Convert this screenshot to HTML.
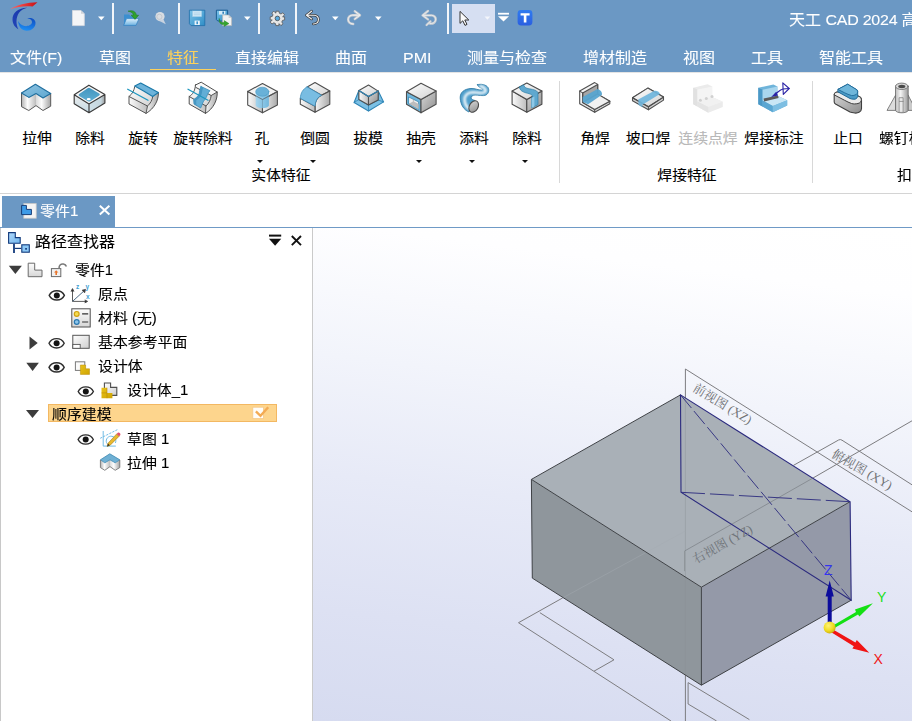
<!DOCTYPE html>
<html lang="zh-CN">
<head>
<meta charset="utf-8">
<title>天工 CAD 2024</title>
<style>
*{margin:0;padding:0;box-sizing:border-box}
html,body{width:912px;height:721px;overflow:hidden;background:#fff}
body{position:relative;font-family:"Liberation Sans","Noto Sans CJK SC",sans-serif;color:#000;font-size:14px}
.abs{position:absolute}
.rl,.gl,.tr{-webkit-text-stroke:0.12px currentColor}
.menu,#title,#tab span{-webkit-text-stroke:0.1px currentColor}
.tr,.menu,#title,#tab span{transform:scaleY(0.93)}
#hdr{position:absolute;left:0;top:0;width:912px;height:72px;background:#6b98c4}
.menu{position:absolute;top:45.5px;height:24px;line-height:24px;font-size:16px;color:#fff;white-space:nowrap}
.menu.on{color:#fbd15c}
#title{position:absolute;top:8px;left:789px;font-size:16px;color:#fff;white-space:nowrap;line-height:24px}
.qsep{position:absolute;top:3px;width:2px;height:31px;background:#f0f4f8}
#ribbon{position:absolute;left:0;top:72px;width:912px;height:121px;background:#fff;box-shadow:inset 0 1px 0 #e4e4e4}
.rl{position:absolute;top:54.8px;height:22px;line-height:22px;font-size:14.85px;white-space:nowrap;text-align:center;transform:translateX(-50%) scaleY(0.93)}
.rl.dis{color:#b8b8b8}
.gl{position:absolute;top:92.2px;height:22px;line-height:22px;font-size:14.85px;white-space:nowrap;transform:translateX(-50%) scaleY(0.93)}
.dd{position:absolute;top:87.6px;width:0;height:0;border-left:3.3px solid transparent;border-right:3.3px solid transparent;border-top:3.5px solid #111;transform:translateX(-50%)}
.rsep{position:absolute;top:9px;width:1px;height:102px;background:#d8d8d8}
#tabstrip{position:absolute;left:0;top:193px;width:912px;height:35px;background:#fff;border-top:1px solid #d4d4d4}
#tab{position:absolute;left:2px;top:196px;width:113px;height:31px;background:#6b98c4;color:#fff;font-size:15px;line-height:30px}
#tabline{position:absolute;left:0;top:227px;width:912px;height:1px;background:#6f9ac6}
#panel{position:absolute;left:0;top:228px;width:313px;height:493px;background:#fff;border-left:1px solid #c8c8c8;border-right:1px solid #cacaca}
.tr{position:absolute;height:24px;line-height:24px;font-size:14.9px;white-space:nowrap}
#view{position:absolute;left:313px;top:228px;width:599px;height:493px;overflow:hidden;background:linear-gradient(187deg,#ffffff 0%,#fefeff 12%,#f2f4fb 35%,#e7eaf7 56%,#dde1f3 80%,#d6dbf0 100%)}
</style>
</head>
<body>
<div id="hdr">
<svg class="abs" style="left:0;top:0" width="912" height="40" viewBox="0 0 912 40">
<defs>
<linearGradient id="gSave" x1="0" y1="0" x2="1" y2="1"><stop offset="0" stop-color="#7cc4ea"/><stop offset="1" stop-color="#2f8dc6"/></linearGradient>
<linearGradient id="gFold" x1="0" y1="0" x2="0" y2="1"><stop offset="0" stop-color="#dff0fb"/><stop offset="1" stop-color="#6fb3e2"/></linearGradient>
<linearGradient id="gT" x1="0" y1="0" x2="0" y2="1"><stop offset="0" stop-color="#2f7bf0"/><stop offset="1" stop-color="#2b5fe0"/></linearGradient>
<linearGradient id="gLogo" x1="1" y1="0" x2="0" y2="1"><stop offset="0" stop-color="#1634a8"/><stop offset="1" stop-color="#2346b8"/></linearGradient><linearGradient id="gLogo2" x1="0.7" y1="0" x2="0.4" y2="1"><stop offset="0" stop-color="#0f4fc4"/><stop offset="1" stop-color="#1e90f4"/></linearGradient>
<linearGradient id="gRed" x1="0" y1="0" x2="1" y2="0"><stop offset="0" stop-color="#ff6a6a"/><stop offset="0.5" stop-color="#e83a3a"/><stop offset="1" stop-color="#c80f14"/></linearGradient>
</defs>
<!-- logo -->
<path d="M10 9.2 C16 5.5 27 2.4 37.5 2.3 L32.6 6.5 C25 5.7 17 6.8 10 9.2Z" fill="url(#gRed)"/>
<path d="M27.2 7.7 C19 7.5 12.3 12.5 12.5 19.5 C12.6 24 15 27.5 18.4 29.2 C16 25 15.5 18 19 12.8 C21 10 24 8.4 27.2 7.7Z" fill="url(#gLogo)"/>
<path d="M18.2 21 C18.5 27 22 30.8 26.8 30.8 C32 30.8 35.8 27 35.5 22.5 C35.2 19.5 32 17.2 27.2 18.3 C30 18.6 32.2 20 32 22.2 C31.6 25 28 26.6 24.5 26 C21.5 25.4 19.4 23.4 18.2 21Z" fill="url(#gLogo2)"/>
<!-- new doc -->
<path d="M72.5 10.5 H81 L84.3 13.8 V25.6 H72.5Z" fill="#f4f5f7" stroke="#d9dbe0" stroke-width="0.8"/>
<path d="M81 10.5 V13.8 H84.3Z" fill="#cfd2d8"/>
<path d="M98 16.6 H104.6 L101.3 20.2Z" fill="#fff"/>
<rect x="112" y="3" width="2" height="31" fill="#f2f5f9"/>
<!-- open -->
<path d="M124 14.5 H129 L130.5 16 H136 V25 H124Z" fill="#3b8fd0"/>
<path d="M126.5 18.6 H139 L136 25.4 H123.6Z" fill="url(#gFold)" stroke="#2f7fc2" stroke-width="0.7"/>
<path d="M128 11.2 C132.5 9.6 136 11.6 136.4 15.2 L138.6 15.2 L135 19.4 L131.2 15.2 L133.4 15.2 C133.2 13 131 11.6 128 11.2Z" fill="#2fa12c" stroke="#1c7a1c" stroke-width="0.5"/>
<!-- grey search -->
<circle cx="160" cy="16.6" r="4.6" fill="#d9dde2"/>
<circle cx="159.4" cy="16.8" r="2.6" fill="none" stroke="#c3c8cf" stroke-width="1"/>
<path d="M158.5 20.5 L165.8 24.2 L163.4 19.2Z" fill="#c9d3e0"/>
<rect x="178" y="3" width="2" height="31" fill="#f2f5f9"/>
<!-- save -->
<path d="M189.4 10.2 H204.8 V25.6 H191.2 L189.4 23.8Z" fill="url(#gSave)" stroke="#1f6fa8" stroke-width="0.8"/>
<rect x="192.6" y="11" width="9" height="5.6" fill="#d7ecf8" stroke="#9fcbe6" stroke-width="0.5"/>
<path d="M193.6 13 H200.6 M193.6 14.8 H200.6" stroke="#9cc8e4" stroke-width="0.7"/>
<rect x="194.6" y="20.6" width="5.2" height="4.4" fill="#eaf4fb"/>
<rect x="196.4" y="21.4" width="1.6" height="2.8" fill="#3d94cc"/>
<!-- save as -->
<path d="M216.4 10.2 H227.6 V21 H217.8 L216.4 19.6Z" fill="url(#gSave)" stroke="#14578c" stroke-width="0.9"/>
<rect x="219" y="11" width="6.4" height="3.6" fill="#d7ecf8"/>
<rect x="222.4" y="11.6" width="1.6" height="2.2" fill="#2f7fb8"/>
<path d="M222.6 15 H228.6 L231.6 18 V25.6 H222.6Z" fill="#f2f2f2" stroke="#b9b9b9" stroke-width="0.7"/>
<path d="M228.6 15 V18 H231.6Z" fill="#cfcfcf"/>
<path d="M219.2 18.4 C219.4 21.6 221.4 22.6 224.2 22.6 L224.2 20.6 L229 23.6 L224.2 26.4 L224.2 24.6 C220.6 24.8 218.6 22.4 219.2 18.4Z" fill="#34a42e" stroke="#1d7d1d" stroke-width="0.4"/>
<path d="M244 16.6 H250.6 L247.3 20.2Z" fill="#fff"/>
<rect x="258" y="3" width="2" height="31" fill="#f2f5f9"/>
<!-- gear -->
<g transform="translate(277.4 18.4)">
<g fill="#e6e6e6" stroke="#555" stroke-width="0.8" stroke-linejoin="round">
<path id="gearp" d="M-1.5 -7.2 H1.5 L2 -5.1 L3.6 -4.4 L5.4 -5.6 L7.2 -3.6 L5.6 -2 L5.2 -1.5 L7.2 -1.5 V1.5 L5.1 2 L4.4 3.6 L5.6 5.4 L3.6 7.2 L2 5.6 L1.5 5.2 V7.2 H-1.5 L-2 5.1 L-3.6 4.4 L-5.4 5.6 L-7.2 3.6 L-5.6 2 L-5.2 1.5 H-7.2 V-1.5 L-5.1 -2 L-4.4 -3.6 L-5.6 -5.4 L-3.6 -7.2 L-2 -5.6 L-1.5 -5.2Z"/>
</g>
<circle r="2.3" fill="#57a9de" stroke="#4a4a4a" stroke-width="0.8"/>
</g>
<rect x="295" y="3" width="2" height="31" fill="#f2f5f9"/>
<!-- undo -->
<g fill="none" stroke-linecap="round" stroke-linejoin="round">
<path d="M311.6 11.2 L306.4 15.2 L311.6 19 M306.8 15.2 H314.2 C320 15.2 320 24 313.4 24" stroke="#3c3c3c" stroke-width="2.6"/>
<path d="M311.6 11.2 L306.4 15.2 L311.6 19 M306.8 15.2 H314.2 C320 15.2 320 24 313.4 24" stroke="#f4f4f4" stroke-width="1.1"/>
<path d="M354.8 11.2 L360 15.2 L354.8 19 M359.6 15.2 H352.6 C346.6 15.2 346.6 24 353.2 24" stroke="#c9cdd2" stroke-width="2.4"/>
<path d="M354.8 11.2 L360 15.2 L354.8 19 M359.6 15.2 H352.6 C346.6 15.2 346.6 24 353.2 24" stroke="#eef0f2" stroke-width="1"/>
<path d="M428 11 L422.6 15.4 L428 19.4 M423 15.4 H431.6 C437.6 15.6 437 24.4 430 23.6 M426.6 25 L430.4 21.4" stroke="#c9cdd2" stroke-width="2.4"/>
<path d="M428 11 L422.6 15.4 L428 19.4 M423 15.4 H431.6 C437.6 15.6 437 24.4 430 23.6 M426.6 25 L430.4 21.4" stroke="#e6e9ec" stroke-width="1"/>
</g>
<path d="M332 16.6 H338.6 L335.3 20.2Z" fill="#fff"/>
<path d="M375 16.6 H381.6 L378.3 20.2Z" fill="#fff"/>
<rect x="447" y="3" width="2" height="31" fill="#f2f5f9"/>
<rect x="452" y="4" width="43" height="29" fill="#d6dff2"/>
<path d="M460 11.4 V23.4 L462.8 20.8 L465 25.4 L467 24.4 L464.8 20 L468.8 20Z" fill="#fafafa" stroke="#333" stroke-width="1" stroke-linejoin="round"/>
<path d="M484.6 16.6 H490.2 L487.4 19.8Z" fill="#f4f6fb"/>
<rect x="498" y="12.8" width="11" height="1.8" fill="#fff"/>
<path d="M498 16.2 H509 L503.5 21.6Z" fill="#fff"/>
<rect x="517.6" y="10" width="14.8" height="15.4" rx="3.4" fill="url(#gT)"/>
<path d="M520.6 13.2 H529.6 V15.6 H526.4 V22.6 H523.8 V15.6 H520.6Z" fill="#fff"/>
</svg>
  <div class="menu" style="left:10px">文件(F)</div>
  <div class="menu" style="left:99px">草图</div>
  <div class="menu on" style="left:167px">特征</div>
  <div class="abs" style="left:150px;top:69px;width:66px;height:1px;background:#fbd15c"></div>
  <div class="menu" style="left:235px">直接编辑</div>
  <div class="menu" style="left:335px">曲面</div>
  <div class="menu" style="left:403px">PMI</div>
  <div class="menu" style="left:467px">测量与检查</div>
  <div class="menu" style="left:583px">增材制造</div>
  <div class="menu" style="left:683px">视图</div>
  <div class="menu" style="left:751px">工具</div>
  <div class="menu" style="left:819px">智能工具</div>
  <div id="title">天工 <span style="letter-spacing:-0.25px">CAD 2024 </span>高级版</div>
</div>
<div id="ribbon">
<!--RIB-->
<svg class="abs" style="left:0;top:0" width="912" height="121" viewBox="0 72 912 121">
<defs>
<linearGradient id="wL" x1="0" y1="0" x2="1" y2="0"><stop offset="0" stop-color="#fbfbfb"/><stop offset="1" stop-color="#bdbdbd"/></linearGradient>
<linearGradient id="wR" x1="0" y1="0" x2="1" y2="0"><stop offset="0" stop-color="#f6f6f6"/><stop offset="1" stop-color="#a9a9a9"/></linearGradient>
<linearGradient id="wT" x1="0" y1="0" x2="1" y2="1"><stop offset="0" stop-color="#ffffff"/><stop offset="1" stop-color="#d2d2d2"/></linearGradient>
<linearGradient id="wD" x1="0" y1="0" x2="1" y2="1"><stop offset="0" stop-color="#d8d8d8"/><stop offset="1" stop-color="#8e8e8e"/></linearGradient>
<linearGradient id="bT" x1="0" y1="0" x2="1" y2="1"><stop offset="0" stop-color="#8fc4e2"/><stop offset="1" stop-color="#5ea7d0"/></linearGradient>
<linearGradient id="bV" x1="0" y1="0" x2="1" y2="0"><stop offset="0" stop-color="#9fd4f0"/><stop offset="1" stop-color="#6ab4dc"/></linearGradient>
<linearGradient id="bW" x1="0" y1="0" x2="0" y2="1"><stop offset="0" stop-color="#c8e6f6"/><stop offset="1" stop-color="#4f9fcb"/></linearGradient>
<linearGradient id="tube" x1="0" y1="0" x2="1" y2="1"><stop offset="0" stop-color="#4d9cc8"/><stop offset="0.45" stop-color="#e8f5fc"/><stop offset="1" stop-color="#3f8fbe"/></linearGradient>
<linearGradient id="pkL" x1="0" y1="0" x2="0" y2="1"><stop offset="0" stop-color="#ececec"/><stop offset="1" stop-color="#c4dbe6"/></linearGradient><linearGradient id="pkR" x1="0" y1="0" x2="1" y2="0"><stop offset="0" stop-color="#cfe0e8"/><stop offset="0.75" stop-color="#c4d6de"/><stop offset="1" stop-color="#9a9a9a"/></linearGradient><linearGradient id="pkB" x1="0" y1="0" x2="0" y2="1"><stop offset="0" stop-color="#4496c0"/><stop offset="1" stop-color="#5eadd2"/></linearGradient><filter id="blur1" x="-20%" y="-20%" width="140%" height="140%"><feGaussianBlur stdDeviation="1.15"/></filter><linearGradient id="cylA" x1="0" y1="0" x2="1" y2="0"><stop offset="0" stop-color="#b2b2b2"/><stop offset="0.42" stop-color="#fdfdfd"/><stop offset="1" stop-color="#bcbcbc"/></linearGradient><linearGradient id="cylB" x1="0" y1="0" x2="1" y2="0"><stop offset="0" stop-color="#dadada"/><stop offset="0.38" stop-color="#fdfdfd"/><stop offset="1" stop-color="#a4a4a4"/></linearGradient><linearGradient id="cyl" x1="0" y1="0" x2="1" y2="0"><stop offset="0" stop-color="#bcbcbc"/><stop offset="0.4" stop-color="#f4f4f4"/><stop offset="1" stop-color="#9a9a9a"/></linearGradient>
</defs>
<g stroke-linejoin="round" stroke-linecap="round">
<!-- 1 拉伸 -->
<path d="M21.5 93 L28.8 97.4 L36 93.5 V105.6 L28.8 110.5 L21.5 106.7Z" fill="url(#cylA)"/>
<path d="M36 93.5 L43 98 L50.7 93.5 V106.2 L43 110.5 L36 105.6Z" fill="url(#cylB)"/>
<path d="M21.5 93 V106.7 L28.8 110.5 L36 105.6 L43 110.5 L50.7 106.2 V93.5" fill="none" stroke="#5a5a5a" stroke-width="1"/>
<path d="M35.4 84.2 L50.7 93.5 L43 98 L36 93.5 L28.8 97.4 L21.5 93Z" fill="url(#bT)" stroke="#1f6e9e" stroke-width="1.1"/>
<!-- 2 除料 pocket -->
<path d="M74.2 94.7 L89 104 V112.7 L74.2 103.7Z" fill="url(#pkL)"/>
<path d="M89 104 L104.9 94.5 V103 L89 112.7Z" fill="url(#pkR)"/>
<path d="M88.9 85.2 L104.9 94.5 L89 104 L74.2 94.7Z" fill="#f6f6f6"/>
<path d="M87.6 88.2 Q88.9 87.4 90.2 88.2 L99.2 93.6 Q100.6 94.5 99.2 95.4 L90.4 101.2 Q89.2 102 87.9 101.2 L79.2 95.9 Q77.8 95 79.2 94.1Z" fill="url(#pkB)"/>
<ellipse cx="88.7" cy="99.2" rx="2" ry="1.1" fill="#fff"/>
<path d="M88.9 85.2 L104.9 94.5 V103 L89 112.7 L74.2 103.7 V94.7Z M74.2 94.7 L89 104 L104.9 94.5 M89 104 V112.7" fill="none" stroke="#3c3c3c" stroke-width="1.15"/>
<!-- 3 旋转 -->
<path d="M134.7 86.7 C134.2 90.4 132.4 93.8 129 96.5 L147.5 106 C150.6 103.4 152.4 100 152.7 96.5Z" fill="url(#wT)"/>
<path d="M129 96.5 L147.5 106 L146 113.4 L129 104Z" fill="url(#wL)"/>
<path d="M152.7 96.5 L158.4 92.5 C158.8 100 154.4 108.6 146 113.4 L147.5 106 C150.6 103.4 152.4 100 152.7 96.5Z" fill="url(#wR)"/>
<path d="M134.7 86.7 C134.2 90.4 132.4 93.8 129 96.5 V104 L146 113.4 C154.4 108.6 158.8 100 158.4 92.5 M129 96.5 L147.5 106 L146 113.4 M147.5 106 C150.6 103.4 152.4 100 152.7 96.5" fill="none" stroke="#555" stroke-width="1"/>
<path d="M134.7 86 L140.7 83 L158.4 92.5 L152.7 96.5 L144 91.2Z" fill="#6db3da" stroke="#1a78a8" stroke-width="1.1"/>
<path d="M127.7 89.2 L148 100.2" stroke="#1e96be" stroke-width="1.3"/>
<!-- 4 旋转除料 -->
<path d="M196 87.5 C195 91.4 192.6 94.4 189.2 96.5 L206 106 C209 103.4 210.8 99.6 211.2 95.5Z" fill="url(#wT)"/>
<path d="M189.2 96.5 L206 106 L205.5 113.4 L189.2 104Z" fill="url(#wL)"/>
<path d="M211.2 95.5 L217.2 92 C217.6 100 213.4 108.6 205.5 113.4 L206 106 C209 103.4 210.8 99.6 211.2 95.5Z" fill="url(#wR)"/>
<path d="M195.5 85 L201.2 82.2 L217.2 92 L211.2 95.5 L196 87.5Z" fill="#fafafa"/>
<path d="M195.5 85 L201.2 82.2 L217.2 92 C217.6 100 213.4 108.6 205.5 113.4 L189.2 104 V96.5 C192.6 94.4 195 91.4 195.5 85Z M196 87.5 L211.2 95.5 L217.2 92 M189.2 96.5 L206 106 L205.5 113.4 M206 106 C209 103.4 210.8 99.6 211.2 95.5" fill="none" stroke="#4f4f4f" stroke-width="1"/>
<path d="M201 86.5 L210 90.7 C207.6 93 207.4 95.4 206.2 97.6 C205 100 203.6 100.8 203.2 102 L200.7 108 L194 104 L193.7 99.5 C196 98 198 96.6 199 94 C199.8 91.6 199.6 89 201 86.5Z" fill="#62aed6" stroke="#2f86b4" stroke-width="0.7"/>
<path d="M193.7 99.5 C196 98 198 96.6 199 94 C199.8 91.6 199.6 89 201 86.5 L203.4 87.6 C202 90 202.2 92.4 201.4 94.8 C200.4 97.4 198.4 98.8 196.2 100.4 L196.4 105.4 L194 104Z" fill="#4596c2"/>
<path d="M188 89.2 L208 100.2" stroke="#1e96be" stroke-width="1.3"/>
<!-- 5 孔 -->
<g stroke="#4f4f4f" stroke-width="1.1">
<path d="M247.7 91.4 L262.5 99.5 V112.8 L247.7 105Z" fill="url(#wL)"/>
<path d="M262.5 99.5 L277.4 91.4 V105 L262.5 112.8Z" fill="url(#wR)"/>
<path d="M262.5 83.5 L277.4 91.4 L262.5 99.5 L247.7 91.4Z" fill="#f3f3f3"/>
</g>
<path d="M255.7 91.7 V105.6 C256.4 109 268.2 109 268.9 105.6 V91.7Z" fill="url(#bV)" opacity="0.92"/>
<ellipse cx="262.3" cy="91.7" rx="6.6" ry="4.5" fill="#69b1d8" stroke="#4a98c2" stroke-width="0.6"/>
<path d="M247.7 91.4 L262.5 99.5 L277.4 91.4" fill="none" stroke="#5a5a5a" stroke-width="0.9" opacity="0.75"/><path d="M262.5 99.5 V112.8" fill="none" stroke="#5a5a5a" stroke-width="0.8" opacity="0.25"/>
<!-- 6 倒圆 -->
<g stroke="#4f4f4f" stroke-width="1.1">
<path d="M307.2 86.9 L315 82.6 L329.8 91.1 L321.6 95.3Z" fill="url(#wT)"/>
<path d="M321.6 95.3 L329.8 91.1 V104.3 L315 112.2 V106.2 C315.4 100.6 317.6 97 321.6 95.3Z" fill="url(#wR)"/>
<path d="M300.3 98.3 L315 106.2 V112.2 L300.3 104.3Z" fill="url(#wL)"/>
</g>
<path d="M307.2 86.9 L321.6 95.3 C317.6 97 315.4 100.6 315 106.2 L300.3 98.3 C300.6 93 303 88.8 307.2 86.9Z" fill="#79bde2" stroke="#3f8fbc" stroke-width="0.8"/>
<!-- 7 拔模 -->
<path d="M358.9 90.5 L354.1 102.5 L368.5 111 L383.6 101.9 L378.2 91.1 L378.2 100.1 L368.5 105 L358.9 99.5Z" fill="#7cc0e4" stroke="#2f85b6" stroke-width="1.1"/>
<path d="M354.1 102.5 L358.9 99.5 M368.5 111 V105 M383.6 101.9 L378.2 100.1" stroke="#2f85b6" stroke-width="0.8" fill="none"/>
<g stroke="#4f4f4f" stroke-width="1.1">
<path d="M358.9 90.5 L368.5 96.5 V105 L358.9 99.5Z" fill="url(#wL)"/>
<path d="M368.5 96.5 L378.2 91.1 V100.1 L368.5 105Z" fill="url(#wD)"/>
<path d="M368.5 85 L378.2 91.1 L368.5 96.5 L358.9 90.5Z" fill="url(#wT)"/>
</g>
<path d="M358.9 90.5 L368.5 96.5 L378.2 91.1" fill="none" stroke="#2f85b6" stroke-width="1.1"/>
<!-- 8 抽壳 -->
<g stroke="#4f4f4f" stroke-width="1.1">
<path d="M406.5 91.7 L421 99.5 V112.8 L406.5 104.3Z" fill="#6fb6dc"/>
<path d="M421 99.5 L436.1 91.1 V104.3 L421 112.8Z" fill="url(#wD)"/>
<path d="M421 83.2 L436.1 91.1 L421 99.5 L406.5 91.7Z" fill="url(#wT)"/>
</g>
<path d="M408.9 97.1 L418.6 101.9 V109.2 L408.9 103.7Z" fill="#efefef" stroke="#2f80ac" stroke-width="0.7"/>
<path d="M408.9 103.7 L413.4 101.2 L418.6 104 V109.2Z" fill="#bdbdbd"/>
<path d="M413.4 99.4 V101.2" stroke="#9a9a9a" stroke-width="0.6"/>
<!-- 9 添料 -->
<path d="M477.5 84.7 C481 83.6 486 84.6 488 87.5 C489.6 90.4 488.4 93.6 486 95 C483 96.4 478 95 475 95 C472.6 95.2 471 96.4 471 98 C471.4 99.4 473 100 475 100.5 L469 112 C464 110 460.6 105 460.2 98 C460 92 464.5 89 471 88.5 C475 88.2 478.6 90.4 481.6 90 C483.4 89.6 483 88.6 481 88 C479.4 87.2 477.6 86.4 477.5 84.7Z" fill="#4f9fcc" stroke="#2f7aa6" stroke-width="0.9"/>
<path d="M480.4 86.4 C484.4 86.8 486.6 89.6 485 92 C483 94.4 478 92.2 473 92.2 C467 92.4 464.2 96 464.6 100.4 C464.8 104 466.4 106.6 469 108.8" fill="none" stroke="#ffffff" stroke-width="2.6" opacity="0.95" filter="url(#blur1)"/>
<ellipse cx="473.7" cy="106.5" rx="4.3" ry="6.2" transform="rotate(30 473.7 106.5)" fill="url(#wD)" stroke="#4a4a4a" stroke-width="1.1"/>
<!-- 10 除料 sweep cut -->
<g stroke="#4a4a4a" stroke-width="1.1">
<path d="M512.1 91.1 L526.8 99.5 V112.2 L512.1 104.3Z" fill="url(#wL)"/>
<path d="M526.8 99.5 L541.9 91.1 V104.3 L526.8 112.2Z" fill="url(#wD)"/>
<path d="M526.8 83 L541.9 91.1 L526.8 99.5 L512.1 91.1Z" fill="url(#wT)"/>
</g>
<path d="M519.6 86.9 L523.6 84.8 C524.6 88.6 528.4 88.6 532.6 89.4 C536.2 90.2 538 91.6 538 93.4 V104.6 L531.6 108 V98 L532.6 96.2 C531.6 93.4 527 93.6 523.6 92 C520.6 90.6 519.2 88.8 519.6 86.9Z" fill="#5fa8cf" stroke="#2f7fa8" stroke-width="0.7"/>
<path d="M531.6 98 L534.4 96.6 V106.4 L531.6 108Z" fill="#8fc8e6"/>
<!-- separators drawn in HTML -->
<!-- 11 角焊 -->
<g stroke="#4f4f4f" stroke-width="1.1">
<path d="M579.7 91.1 L594.7 82.6 L597.7 84.4 V94.1 L609.8 101.3 V103.7 L594.7 112.2 L579.7 103.7Z" fill="url(#wT)"/>
<path d="M582.7 92.9 L597.7 84.4 V94.1 L582.7 102.4Z" fill="#a6a6a6"/>
<path d="M579.7 91.1 L582.7 92.9 V102.4 L594.7 109.4 L609.8 101.3 M594.7 109.4 V112.2" fill="none"/>
<path d="M582.7 102.4 L597.7 94.1 L609.8 101.3 L594.7 109.4Z" fill="#f1f1f1"/>
</g>
<path d="M582.7 97.1 L597.7 89 C600.6 90 602.4 92.2 602 94.7 L588.1 104.3 L582.7 101.9Z" fill="#57a4cf" opacity="0.95"/>
<!-- 12 坡口焊 -->
<g stroke="#4f4f4f" stroke-width="1.1">
<path d="M632.5 97.7 L647.8 88.1 L663.5 97.1 V100.1 L648.4 109.8 L632.5 100.7Z" fill="#d0d0d0"/>
<path d="M632.5 97.7 L647.8 88.1 L663.5 97.1 L648.4 106.8Z" fill="url(#wT)"/>
<path d="M632.5 97.7 L648.4 106.8 L663.5 97.1 M648.4 106.8 V109.8" fill="none"/>
</g>
<path d="M638.2 99.5 L654.4 90.8 C657.2 90.4 659.6 91.8 659.9 94.1 L642.4 104.7 C640 104.2 638.2 102 638.2 99.5Z" fill="#6fb5dc" opacity="0.92"/>
<path d="M638.4 101 L642.4 104.7 V107.4 L638.4 104.8Z" fill="#6fb5dc" opacity="0.85"/>
<!-- 13 连续点焊 (disabled) -->
<g opacity="0.9">
<path d="M693.2 87.8 L707.6 84.2 L712.2 86.5 V97 L722.8 101.7 V106.9 L708.3 112.8 L693.2 104.3Z" fill="#e9e9e9"/>
<path d="M693.2 87.8 L697.4 89.6 V106.6 L693.2 104.3Z" fill="#dedede"/>
<path d="M697.4 89.6 L712.2 86.5 V97 L697.4 101.4Z" fill="#f3f3f3"/>
<path d="M697.4 101.4 L712.2 97 L722.8 101.7 L708.3 107Z" fill="#f0f0f0"/>
<path d="M697.4 101.4 L708.3 107 V112.8 L697.4 106.6Z" fill="#e2e2e2"/>
<circle cx="700.4" cy="100.3" r="1.5" fill="#cdcdcd"/><circle cx="706.3" cy="98.6" r="1.5" fill="#cdcdcd"/><circle cx="712" cy="96.4" r="1.5" fill="#cdcdcd"/>
</g>
<!-- 14 焊接标注 -->
<path d="M758.3 87.8 L773.4 84.6 L777.4 86.5 V95.7 L787.2 100.3 V105.6 L772.8 112.2 L758.3 104.3Z" fill="#6fb4da"/>
<path d="M758.3 87.8 L762.6 89.8 V106.6 L758.3 104.3Z" fill="#4a98c6"/>
<path d="M762.6 89.8 L777.4 86.5 V95.7 L762.6 100.6Z" fill="#a9d6ee"/>
<path d="M762.6 100.6 L777.4 95.7 L787.2 100.3 L772.8 106Z" fill="#c9e6f5"/>
<path d="M762.6 100.6 L772.8 106 V112.2 L762.6 106.6Z" fill="#5aa6d2"/>
<path d="M772.8 106 L787.2 100.3 V105.6 L772.8 112.2Z" fill="#7dbee2"/>
<path d="M763.6 98.6 L778 95.4 L778.6 98 L764.2 101.6Z" fill="#5a5a5a"/>
<g stroke="#2a23a6" fill="none" stroke-width="1.1">
<path d="M774.6 94.6 C778 92.6 779.4 89.6 783 89 L789.2 88.5"/>
<path d="M782.8 82.8 L789.2 88.5 L783.3 94.4Z"/>
</g>
<path d="M771.2 97 L776.2 91.8 L778 95.4Z" fill="#2a23a6"/>
<!-- 15 止口 -->
<path d="M834.2 94.5 C834.4 92.6 836.4 91.6 838.6 92.2 L858 96 C860.4 96.6 861.5 98 861.5 100 V108.6 C861.5 112 857.6 113.8 853.6 112.8 C852 112.4 851 112.2 850 112 L836.4 104.6 C835 103.8 834.2 103.6 834.2 102Z" fill="url(#wD)" stroke="#3f3f3f" stroke-width="1.1"/>
<path d="M834.2 94.5 C834.4 92.6 836.4 91.6 838.6 92.2 L858 96 C862.6 97.6 862.4 102.4 858 103.5 C855.6 104 853.6 104.2 851.5 103.5 C849 102.6 847 101.6 845 100.5Z" fill="#ececec" stroke="#3f3f3f" stroke-width="1"/>
<path d="M838.2 89.2 L847.7 84.2 L857.2 90 C857.8 91 857.8 92 857.7 93 V96.5 C857 98.6 855.4 99.4 854 99.2 C852.4 99.2 851 99 850 98.5 L838.2 92Z" fill="#4a9ac6" stroke="#1f6a98" stroke-width="1"/>
<path d="M838.2 89.2 L847.7 84.2 L857.2 90 C858.4 92.6 857 94.6 855 95 C853.6 95.6 852.4 95.8 851.5 95.5 C849 94.8 847 94 845 93Z" fill="#6fb6da" stroke="#1f6a98" stroke-width="0.9"/>
<!-- 16 螺钉柱 -->
<g stroke="#666" stroke-width="0.8">
<path d="M895.5 95.3 L887 110.4 H895.5Z" fill="#dcdcdc"/>
<path d="M908.2 95.3 L916 110.4 H908.2Z" fill="#c9c9c9"/>
<path d="M895.5 86.3 V110.4 C896.4 113.6 907.2 113.6 908.2 110.4 V86.3Z" fill="url(#cyl)"/>
<ellipse cx="901.8" cy="86.3" rx="6.3" ry="3.2" fill="#d9d9d9"/>
</g>
<ellipse cx="901.8" cy="86.5" rx="3.6" ry="1.7" fill="#4a4a4a"/>
<path d="M899.5 97.7 H903.1 V112.4 H899.5Z" fill="#e9e9e9" stroke="#777" stroke-width="0.7"/>
<path d="M899.5 101.4 H903.1" stroke="#777" stroke-width="0.7"/>
</g>
</svg>
<!--/RIB-->
  <div class="rl" style="left:37px">拉伸</div>
  <div class="rl" style="left:90px">除料</div>
  <div class="rl" style="left:143px">旋转</div>
  <div class="rl" style="left:203px">旋转除料</div>
  <div class="rl" style="left:262px">孔</div>
  <div class="rl" style="left:315px">倒圆</div>
  <div class="rl" style="left:368px">拔模</div>
  <div class="rl" style="left:421px">抽壳</div>
  <div class="rl" style="left:474px">添料</div>
  <div class="rl" style="left:527px">除料</div>
  <div class="rl" style="left:595px">角焊</div>
  <div class="rl" style="left:648px">坡口焊</div>
  <div class="rl dis" style="left:708px">连续点焊</div>
  <div class="rl" style="left:774px">焊接标注</div>
  <div class="rl" style="left:848px">止口</div>
  <div class="rl" style="left:879px;transform:scaleY(0.93)">螺钉柱</div>
  <div class="gl" style="left:281px">实体特征</div>
  <div class="gl" style="left:687px">焊接特征</div>
  <div class="gl" style="left:897px;transform:scaleY(0.93)">扣合特征</div>
  <div class="dd" style="left:260px"></div>
  <div class="dd" style="left:313px"></div>
  <div class="dd" style="left:419px"></div>
  <div class="dd" style="left:472px"></div>
  <div class="dd" style="left:525px"></div>
  <div class="rsep" style="left:559px"></div>
  <div class="rsep" style="left:812px"></div>
</div>
<div id="tabstrip"></div>
<div id="tab"><svg class="abs" style="left:0;top:0" width="113" height="31" viewBox="2 196 113 31">
<rect x="23.8" y="203.6" width="12.4" height="14.6" fill="#f4f4f4" stroke="#c9c9c9" stroke-width="0.8"/>
<path d="M21.6 205.4 H26.4 V209.4 H31.4 V214.6 H21.6Z" fill="#3d9be8" stroke="#163e78" stroke-width="1"/>
<path d="M99.8 205.8 L109.4 214.6 M109.4 205.8 L99.8 214.6" stroke="#fff" stroke-width="2"/>
</svg><span class="abs" style="left:38px;top:0">零件1</span></div>
<div id="tabline"></div>
<div id="panel">
<!--PAN-->
<svg class="abs" style="left:-1px;top:0" width="313" height="493" viewBox="0 228 313 493">
<defs>
<linearGradient id="pg1" x1="0" y1="0" x2="1" y2="1"><stop offset="0" stop-color="#ffffff"/><stop offset="1" stop-color="#cfcfcf"/></linearGradient>
<linearGradient id="pg2" x1="0" y1="0" x2="0" y2="1"><stop offset="0" stop-color="#fdfdfd"/><stop offset="1" stop-color="#d6d6d6"/></linearGradient>
<linearGradient id="pgB" x1="0" y1="0" x2="1" y2="1"><stop offset="0" stop-color="#b0d8fa"/><stop offset="1" stop-color="#70b6ee"/></linearGradient>
<linearGradient id="pgGold" x1="0" y1="0" x2="1" y2="1"><stop offset="0" stop-color="#e8c21c"/><stop offset="1" stop-color="#cfa402"/></linearGradient>
<g id="eye">
<path d="M-7.6 0 C-4.6 -6.2 4.6 -6.2 7.6 0 C4.6 6.2 -4.6 6.2 -7.6 0Z" fill="#fff" stroke="#2e2e2e" stroke-width="1.4"/>
<circle r="3" fill="#141414"/>
</g>
</defs>
<!-- header icon -->
<path d="M8.6 232.6 H15.3 V237.6 H20.2 V243.2 H8.6Z" fill="url(#pgB)" stroke="#123a7c" stroke-width="1.1"/>
<path d="M14 243.7 V252.9" stroke="#123a7c" stroke-width="1.8" fill="none"/>
<path d="M14.9 248.4 H21.3" stroke="#123a7c" stroke-width="1.2" fill="none"/>
<rect x="21.8" y="244.8" width="7.5" height="7.4" fill="#8cc8f6" stroke="#123a7c" stroke-width="1.1"/>
<rect x="25.2" y="248" width="1.7" height="1.7" fill="#123a7c"/>
<!-- pin & close -->
<rect x="269" y="234.6" width="12.2" height="2" fill="#111"/>
<path d="M269 238.8 H281.2 L275.1 245.8Z" fill="#111"/>
<path d="M291.8 236 L301 245.2 M301 236 L291.8 245.2" stroke="#111" stroke-width="1.9"/>
<!-- row 零件1 -->
<path d="M8.8 265.7 H21.9 L15.35 274Z" fill="#3c3c3c"/>
<path d="M28.2 263.2 H34.7 V270.1 H42 V276.7 H28.2Z" fill="url(#pg2)" stroke="#6a6a6a" stroke-width="1"/>
<rect x="51.4" y="268.6" width="9.4" height="8" fill="#f0f0f0" stroke="#6a6a6a" stroke-width="1"/>
<path d="M56.2 270.2 L58.4 272.6 H57 V275 H55.4 V272.6 H54Z" fill="#e8742a"/>
<path d="M59 268.4 C59 265 61 263.6 63.4 264 C65 264.3 66 265.2 66.4 266.4" fill="none" stroke="#7a7a7a" stroke-width="1.6"/>
<!-- row 原点 -->
<use href="#eye" x="56.8" y="295.4"/>
<g stroke="#4a4a4a" stroke-width="0.9" fill="none">
<path d="M72.5 301.4 V289.2 M72.5 301.4 H87 "/>
<path d="M71 291.4 L72.5 288.6 L74 291.4 M84.8 299.9 L87.6 301.4 L84.8 302.9" fill="#333"/>
<path d="M72.5 301.4 L85 290" stroke="#3a5a78"/>
<path d="M82.2 290.2 L85.6 289.4 L84.6 292.8Z" fill="#333"/>
</g>
<text x="76" y="289" font-size="6.5" font-weight="bold" fill="#3f9fd2" font-family="Liberation Sans, sans-serif">z</text>
<text x="85.6" y="289" font-size="6.5" font-weight="bold" fill="#3f9fd2" font-family="Liberation Sans, sans-serif">y</text>
<text x="86" y="298.6" font-size="6.5" font-weight="bold" fill="#3f9fd2" font-family="Liberation Sans, sans-serif">x</text>
<!-- row 材料 -->
<rect x="71.8" y="308.8" width="18.4" height="18.2" fill="url(#pg2)" stroke="#4f4f4f" stroke-width="1"/>
<circle cx="76.7" cy="313.9" r="2.4" fill="#f4dc50" stroke="#d0a010" stroke-width="1.2"/>
<circle cx="76.7" cy="322" r="2.4" fill="#8cc4ea" stroke="#2a78b0" stroke-width="1.2"/>
<path d="M82.1 313.9 H88.2 M82.1 322 H88.2" stroke="#333" stroke-width="1.2"/>
<!-- row 基本参考平面 -->
<path d="M29.5 336.4 V349.6 L37.7 343Z" fill="#3c3c3c"/>
<use href="#eye" x="56.6" y="343.3"/>
<rect x="72.8" y="335.3" width="16.4" height="13" fill="url(#pg1)" stroke="#555" stroke-width="1"/>
<rect x="72.8" y="344.4" width="7.4" height="3.9" fill="#fff" stroke="#555" stroke-width="0.9"/>
<!-- row 设计体 -->
<path d="M26.3 362.7 H38.9 L32.6 371Z" fill="#3c3c3c"/>
<use href="#eye" x="56.6" y="367.4"/>
<rect x="75.4" y="361.8" width="9.4" height="8.6" fill="#fafafa" stroke="#7a7a7a" stroke-width="1"/>
<path d="M80.4 365 H85.6 V368.8 H89.5 V374.4 H80.4Z" fill="url(#pgGold)" stroke="#b88a08" stroke-width="0.5"/>
<!-- row 设计体_1 -->
<use href="#eye" x="85.8" y="391.5"/>
<path d="M104.4 383 H110.6 V387.4 H116.8 V395.4 H104.4Z" fill="url(#pg1)" stroke="#4f4f4f" stroke-width="1.1"/>
<path d="M101.5 387.7 H107 V392.9 H112.4 V398.2 H101.5Z" fill="url(#pgGold)"/>
<path d="M101.5 392.9 H107 V398.2 M107 392.9 V387.7" stroke="#b88a08" stroke-width="0.6" fill="none"/>
<!-- row 顺序建模 -->
<path d="M26 410 H39 L32.5 418Z" fill="#3c3c3c"/>
<rect x="48.5" y="404.5" width="228" height="17" fill="#fdd58d" stroke="#f3b862" stroke-width="1"/>
<rect x="252.8" y="407.2" width="10.6" height="11.4" fill="#fffdf8" stroke="#f4c98a" stroke-width="0.8"/>
<path d="M255.9 411.4 L260.5 415.8 L268.2 407.2" fill="none" stroke="#f3ab54" stroke-width="2.4"/>
<!-- row 草图 -->
<use href="#eye" x="85.7" y="439.5"/>
<g fill="none" stroke="#62b4e2" stroke-width="0.9">
<path d="M103.2 431 V446.1 H115.8"/>
<path d="M100.2 438.3 L118.3 429.2" stroke-dasharray="2.2 1.2"/>
<path d="M107 443.6 A4.8 4.8 0 1 1 115.4 443"/>
</g>
<path d="M116.6 434 L119.2 436.2 L110.2 445.2 L107.2 446.4 L108 443.2Z" fill="#eab92e" stroke="#8a6a10" stroke-width="0.5"/>
<path d="M116.6 434 L117.8 432.8 C119 432 120.8 433.6 120.4 435 L119.2 436.2Z" fill="#e2506a"/>
<path d="M107.2 446.4 L107.9 443.6 L109.8 445.3Z" fill="#3a3020"/>
<!-- row 拉伸 -->
<g stroke-linejoin="round">
<path d="M100.4 459.8 L104.8 462.6 L110 459.8 V466.6 L104.8 470.3 L100.4 467.6Z" fill="url(#cylA)"/>
<path d="M110 459.8 L115.2 462.6 L119.8 459.8 V467.6 L115.2 470.3 L110 466.6Z" fill="url(#cylB)"/>
<path d="M109.8 453.8 L119.8 459.8 L115.2 462.8 L110 459.8 L104.8 462.8 L100.4 459.8Z" fill="#6fb0d4" stroke="#3f8ab2" stroke-width="0.8"/>
<path d="M100.4 460 V467.6 L104.8 470.3 L110 466.6 L115.2 470.3 L119.8 467.6 V460" fill="none" stroke="#6a6a6a" stroke-width="0.8"/>
</g>
</svg>
<!--/PAN-->
  <div class="tr" style="left:34px;top:2px;font-size:16px">路径查找器</div>
  <div class="tr" style="left:74px;top:30px">零件1</div>
  <div class="tr" style="left:97px;top:54px">原点</div>
  <div class="tr" style="left:97px;top:78px">材料 (无)</div>
  <div class="tr" style="left:97px;top:102px">基本参考平面</div>
  <div class="tr" style="left:97px;top:126.3px">设计体</div>
  <div class="tr" style="left:126px;top:150.3px">设计体_1</div>
  <div class="tr" style="left:51px;top:174.4px">顺序建模</div>
  <div class="tr" style="left:126px;top:199px">草图 1</div>
  <div class="tr" style="left:126px;top:222.5px">拉伸 1</div>
</div>
<div id="view">
<!--VIEW-->
<svg class="abs" style="left:0;top:0" width="599" height="493" viewBox="313 228 599 493">
<defs>
<radialGradient id="ball" cx="0.4" cy="0.35" r="0.7"><stop offset="0" stop-color="#fff27a"/><stop offset="0.6" stop-color="#f0dc20"/><stop offset="1" stop-color="#c8a810"/></radialGradient>
</defs>
<g fill="none" stroke="#7d7d80" stroke-width="1">
<!-- plane outlines behind box -->
<path d="M685.4 721 V369 L912 511.8"/>
<path d="M812 478.6 L912 420.8"/>
<path d="M793.4 465.4 L838.6 440 Q840.4 439 842 440.2 L912 484.8"/>
<path d="M562.7 597.9 L518.5 622.7 L671 721"/>
<path d="M539.9 612.7 L614 659.8 L594 671.2"/>
<path d="M688.1 682.6 V704 L716.6 721 M688.1 682.6 L749.4 719.6"/>
</g>
<!-- box -->
<path d="M680.5 394.9 L531.4 479.4 L701.4 587.2 L850.1 501.7Z" fill="#a9b0b7"/>
<path d="M531.4 479.4 L701.4 587.2 V685.2 L532.3 578.1Z" fill="#8f969c"/>
<path d="M701.4 587.2 L850.1 501.7 L851.2 600.2 L701.4 685.2Z" fill="#9499a8"/>
<!-- faint plane lines through box -->
<g fill="none" stroke="#8a9096" stroke-width="1" opacity="0.4">
<path d="M685.4 396 V676"/>
</g>
<path d="M684.6 551 L812 478.6" stroke="#80858b" stroke-width="1" fill="none" opacity="0.8"/>
<path d="M562.7 597.9 L685.4 531" stroke="#a4abb1" stroke-width="1" fill="none" opacity="0.45"/>
<path d="M684.6 551 V571.2" stroke="#8d9398" stroke-width="1" fill="none"/>
<!-- box edges -->
<g fill="none" stroke="#3f4246" stroke-width="1" stroke-linejoin="round">
<path d="M680.5 394.9 L531.4 479.4 L701.4 587.2 L850.1 501.7"/>
<path d="M531.4 479.4 L532.3 578.1 L701.4 685.2 L851.2 600.2"/>
<path d="M701.4 587.2 V685.2"/>
</g>
<!-- sketch -->
<g fill="none" stroke="#2b2a7e" stroke-width="1.1">
<path d="M680.5 394.9 L850.1 501.7 L851.2 600.2 L681 492.3Z"/>
<path d="M680.5 394.9 L851.2 600.2" stroke-dasharray="17 4" stroke-width="0.9"/>
<path d="M681 492.3 L850.1 501.7" stroke-dasharray="24 5" stroke-width="0.9"/>
</g>
<!-- plane labels -->
<g font-family="Liberation Serif, Noto Serif CJK SC, serif" font-size="12.6" fill="#6f7174">
<text transform="translate(692 390.6) rotate(31)" x="0" y="0">前视图 (XZ)</text>
<text transform="translate(830.7 456.4) rotate(30)" x="0" y="0">俯视图 (XY)</text>
<text transform="translate(695.7 564.1) rotate(-29.4)" x="0" y="0" fill="#70757a">右视图 (YZ)</text>
</g>
<!-- triad -->
<path d="M827.7 627 V596.5 H825.6 L829.7 580.4 L833.8 596.5 H831.7 V627Z" fill="#0c0c9c"/>
<path d="M829.6 627.5 L856 612 L855 609.6 L872.9 603.2 L859.4 616.4 L858 614.4 L831 630Z" fill="#14e014"/>
<path d="M829.6 627.5 L855.4 642.4 L856.8 640 L869.3 652.7 L852.4 648.6 L853.8 646.2 L828.4 630.6Z" fill="#f01414"/>
<circle cx="829.6" cy="627.5" r="6" fill="url(#ball)"/>
<g font-family="Liberation Sans, sans-serif" font-size="14">
<text x="824" y="575.4" fill="#3434f0">Z</text>
<text x="877" y="602.4" fill="#18e018">Y</text>
<text x="873.6" y="664.4" fill="#f01818">X</text>
</g>
</svg>
<!--/VIEW-->
</div>
</body>
</html>
